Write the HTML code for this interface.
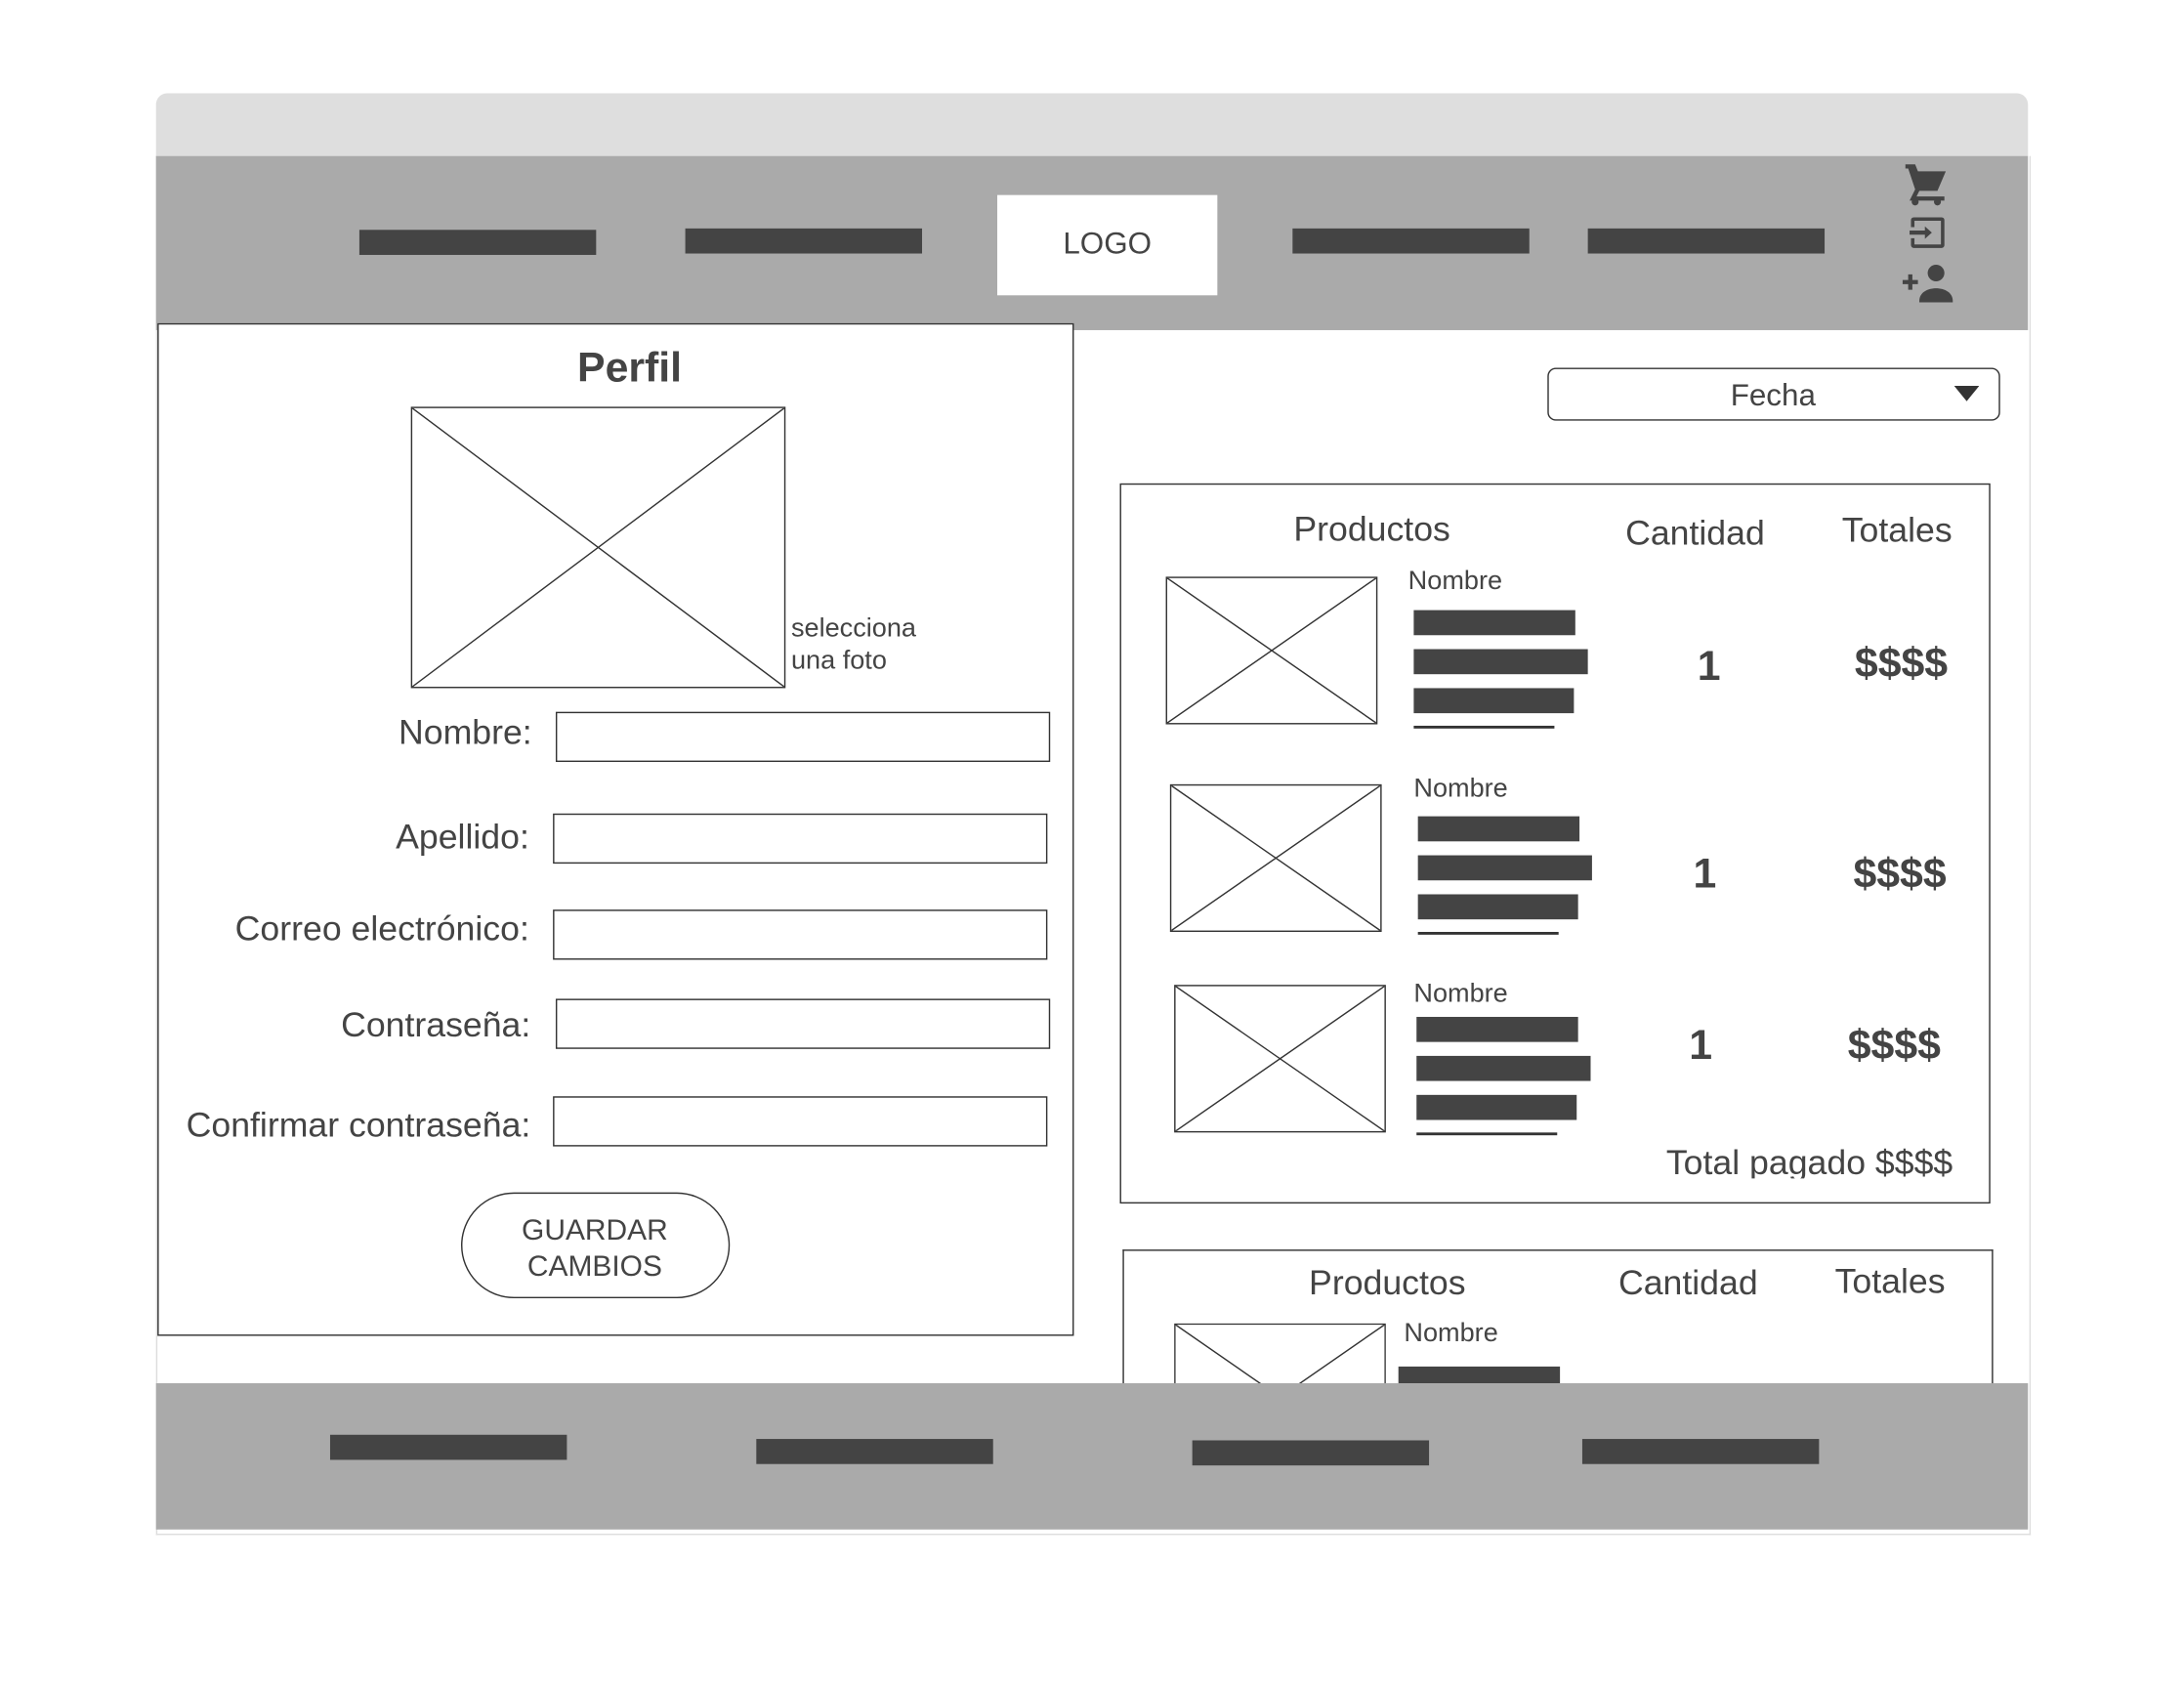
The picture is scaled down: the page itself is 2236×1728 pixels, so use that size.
<!DOCTYPE html>
<html><head><meta charset="utf-8"><style>
html,body{margin:0;padding:0;background:#fff;width:2236px;height:1728px;overflow:hidden}
#w{position:absolute;left:0;top:0;width:1568px;height:1212px;transform:scale(1.426);transform-origin:0 0;font-family:"Liberation Sans",sans-serif;color:#444}
#w div{position:absolute;box-sizing:border-box}
.bar{background:#444;height:18px}
.t{line-height:1;white-space:nowrap}
.c{transform:translateX(-50%)}
.r{transform:translateX(-100%)}
.in{border:1.5px solid #333;background:#fff;height:36px}
.b{border:1.5px solid #333}
.ph{border:1.5px solid #333;background:#fff}
.ph svg{position:absolute;left:0;top:0;width:100%;height:100%}
</style></head><body><div id="w">
<div style="left:112px;top:67px;width:1344px;height:45px;background:#dedede;border-radius:8px 8px 0 0"></div>
<div style="left:112px;top:112px;width:1346px;height:990px;border:1.5px solid #ddd;border-top:none"></div>
<div style="left:112px;top:112px;width:1344px;height:125px;background:#aaa"></div>
<div class="bar" style="left:258px;top:165px;width:170px"></div>
<div class="bar" style="left:492px;top:164px;width:170px"></div>
<div class="bar" style="left:928px;top:164px;width:170px"></div>
<div class="bar" style="left:1140px;top:164px;width:170px"></div>
<div style="left:716px;top:140px;width:158px;height:72px;background:#fff"></div>
<div class="t c" style="left:795px;top:164px;font-size:22px">LOGO</div>
<svg style="position:absolute;left:1362px;top:114px" width="48" height="108" viewBox="0 0 48 108">
<g fill="#444">
<path d="M6 4h7l2 5h20l-6 14H16l-2 4h20v3H9l4-8-5-15H6z"/>
<circle cx="13" cy="31" r="2.5"/><circle cx="29" cy="31" r="2.5"/>
<path d="M12 42h20a2 2 0 0 1 2 2v18a2 2 0 0 1-2 2H12a2 2 0 0 1-2-2v-5h2.5v4.5h19v-17h-19v4.5H10v-5a2 2 0 0 1 2-2z"/>
<path d="M9 51.5h11v-3l5 4.5-5 4.5v-3H9z"/>
<circle cx="28" cy="82" r="6"/>
<path d="M16 102c0-6 6-9 12-9s12 3 12 9v1H16z"/>
<path d="M4 87h4v-4h3v4h4v3h-4v4H8v-4H4z"/>
</g></svg>
<!-- Perfil panel -->
<div class="b" style="left:113px;top:232px;width:658px;height:727px;background:#fff"></div>
<div class="t c" style="left:452px;top:250px;font-size:30px;font-weight:bold">Perfil</div>
<div class="ph" style="left:295px;top:292px;width:269px;height:202px"><svg viewBox="0 0 100 100" preserveAspectRatio="none"><path d="M0 0L100 100M100 0L0 100" stroke="#333" stroke-width="1" vector-effect="non-scaling-stroke" fill="none"/></svg></div>
<div class="t" style="left:568px;top:440px;font-size:19px;line-height:23px">selecciona<br>una foto</div>
<div class="t r" style="left:382px;top:514px;font-size:25px">Nombre:</div>
<div class="in" style="left:399px;top:511px;width:355px"></div>
<div class="t r" style="left:380px;top:589px;font-size:25px">Apellido:</div>
<div class="in" style="left:397px;top:584px;width:355px"></div>
<div class="t r" style="left:380px;top:655px;font-size:25px">Correo electrónico:</div>
<div class="in" style="left:397px;top:653px;width:355px"></div>
<div class="t r" style="left:381px;top:724px;font-size:25px">Contraseña:</div>
<div class="in" style="left:399px;top:717px;width:355px"></div>
<div class="t r" style="left:381px;top:796px;font-size:25px">Confirmar contraseña:</div>
<div class="in" style="left:397px;top:787px;width:355px"></div>
<div style="left:331px;top:856px;width:193px;height:76px;border:1.5px solid #333;border-radius:38px"></div>
<div class="t c" style="left:427px;top:871px;font-size:21px;line-height:26px;text-align:center">GUARDAR<br>CAMBIOS</div>
<!-- Fecha -->
<div style="left:1111px;top:264px;width:325px;height:38px;border:1.5px solid #333;border-radius:6px"></div>
<div class="t c" style="left:1273px;top:273px;font-size:22px">Fecha</div>
<svg style="position:absolute;left:1403px;top:277px" width="18" height="12"><path d="M0 0h18L9 11z" fill="#333"/></svg>
<!-- order box 1 -->
<div class="b" style="left:804px;top:347px;width:625px;height:517px"></div>
<div class="t c" style="left:985px;top:368px;font-size:25px">Productos</div>
<div class="t c" style="left:1217px;top:371px;font-size:25px">Cantidad</div>
<div class="t c" style="left:1362px;top:369px;font-size:25px">Totales</div>

<div class="ph" style="left:837px;top:414px;width:152px;height:106px"><svg viewBox="0 0 100 100" preserveAspectRatio="none"><path d="M0 0L100 100M100 0L0 100" stroke="#333" stroke-width="1" vector-effect="non-scaling-stroke" fill="none"/></svg></div>
<div class="t" style="left:1011px;top:408px;font-size:19px">Nombre</div>
<div class="bar" style="left:1015px;top:438px;width:116px"></div>
<div class="bar" style="left:1015px;top:466px;width:125px"></div>
<div class="bar" style="left:1015px;top:494px;width:115px"></div>
<div style="left:1015px;top:521px;width:101px;height:1.5px;background:#333"></div>
<div class="t c" style="left:1227px;top:464px;font-size:30px;font-weight:bold">1</div>
<div class="t c" style="left:1365px;top:462px;font-size:30px;font-weight:bold">$$$$</div>

<div class="ph" style="left:840px;top:563px;width:152px;height:106px"><svg viewBox="0 0 100 100" preserveAspectRatio="none"><path d="M0 0L100 100M100 0L0 100" stroke="#333" stroke-width="1" vector-effect="non-scaling-stroke" fill="none"/></svg></div>
<div class="t" style="left:1015px;top:557px;font-size:19px">Nombre</div>
<div class="bar" style="left:1018px;top:586px;width:116px"></div>
<div class="bar" style="left:1018px;top:614px;width:125px"></div>
<div class="bar" style="left:1018px;top:642px;width:115px"></div>
<div style="left:1018px;top:669px;width:101px;height:1.5px;background:#333"></div>
<div class="t c" style="left:1224px;top:613px;font-size:30px;font-weight:bold">1</div>
<div class="t c" style="left:1364px;top:613px;font-size:30px;font-weight:bold">$$$$</div>

<div class="ph" style="left:843px;top:707px;width:152px;height:106px"><svg viewBox="0 0 100 100" preserveAspectRatio="none"><path d="M0 0L100 100M100 0L0 100" stroke="#333" stroke-width="1" vector-effect="non-scaling-stroke" fill="none"/></svg></div>
<div class="t" style="left:1015px;top:704px;font-size:19px">Nombre</div>
<div class="bar" style="left:1017px;top:730px;width:116px"></div>
<div class="bar" style="left:1017px;top:758px;width:125px"></div>
<div class="bar" style="left:1017px;top:786px;width:115px"></div>
<div style="left:1017px;top:813px;width:101px;height:1.5px;background:#333"></div>
<div class="t c" style="left:1221px;top:736px;font-size:30px;font-weight:bold">1</div>
<div class="t c" style="left:1360px;top:736px;font-size:30px;font-weight:bold">$$$$</div>
<div style="left:1100px;top:820px;width:302px;height:26px;overflow:hidden"><div class="t" style="right:0;top:3px;font-size:25px">Total pagado $$$$</div></div>

<!-- order box 2 -->
<div style="left:806px;top:897px;width:625px;height:96px;border:1.5px solid #333;border-bottom:none"></div>
<div class="t c" style="left:996px;top:909px;font-size:25px">Productos</div>
<div class="t c" style="left:1212px;top:909px;font-size:25px">Cantidad</div>
<div class="t c" style="left:1357px;top:908px;font-size:25px">Totales</div>
<div style="left:843px;top:950px;width:152px;height:43px;overflow:hidden"><div class="ph" style="left:0;top:0;width:152px;height:106px"><svg viewBox="0 0 100 100" preserveAspectRatio="none"><path d="M0 0L100 100M100 0L0 100" stroke="#333" stroke-width="1" vector-effect="non-scaling-stroke" fill="none"/></svg></div></div>
<div class="t" style="left:1008px;top:948px;font-size:19px">Nombre</div>
<div class="bar" style="left:1004px;top:981px;width:116px;height:12px"></div>
<!-- footer -->
<div style="left:112px;top:993px;width:1344px;height:105px;background:#aaa"></div>
<div class="bar" style="left:237px;top:1030px;width:170px"></div>
<div class="bar" style="left:543px;top:1033px;width:170px"></div>
<div class="bar" style="left:856px;top:1034px;width:170px"></div>
<div class="bar" style="left:1136px;top:1033px;width:170px"></div>
</div></body></html>
